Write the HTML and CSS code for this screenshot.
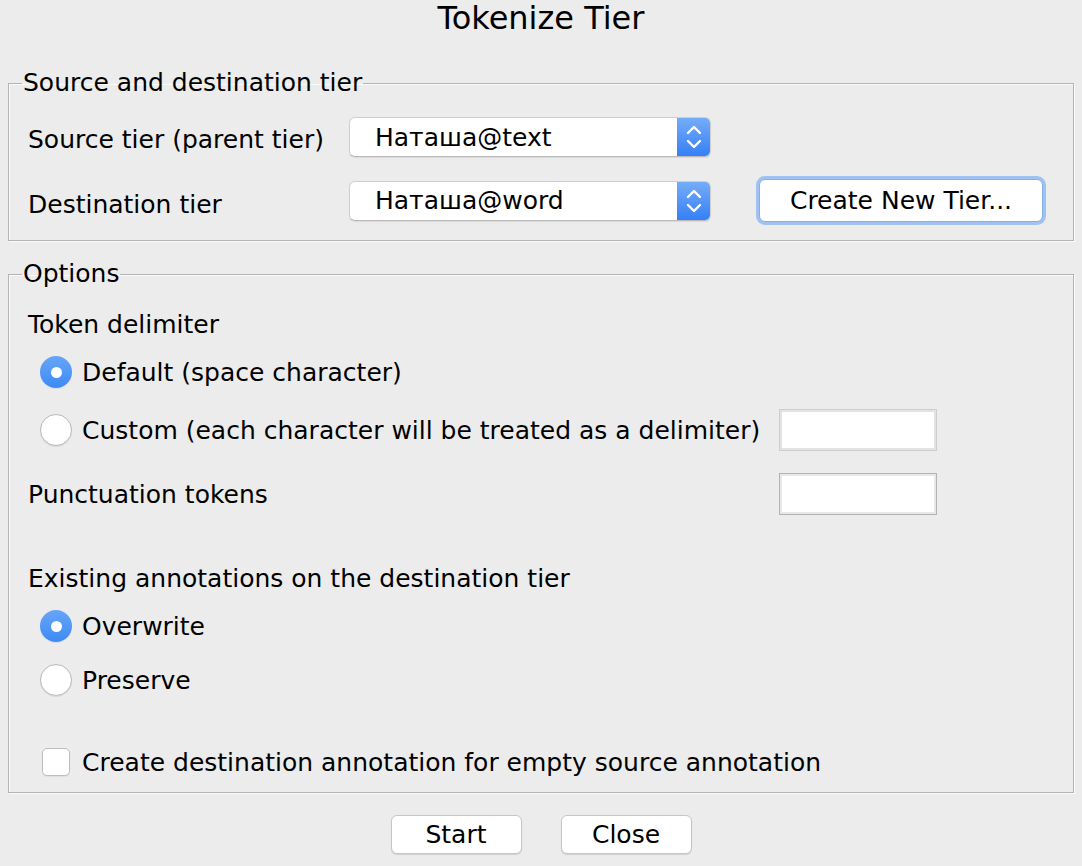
FILE: index.html
```html
<!DOCTYPE html>
<html>
<head>
<meta charset="utf-8">
<link rel="stylesheet" href="styles.css">
</head>
<body>
<div class="dialog">
  <h1 class="title">Tokenize Tier</h1>

  <fieldset class="group group-tiers">
    <legend class="legend">Source and destination tier</legend>
    <div class="tier-grid">
      <div class="label">Source tier (parent tier)</div>
      <div class="combo">
        <span class="combo-text">Наташа@text</span>
        <span class="combo-arrow">
          <svg width="20" height="30" viewBox="0 0 20 30"><path d="M4 11 L10 5 L16 11" fill="none" stroke="#fff" stroke-width="2.4" stroke-linecap="round" stroke-linejoin="round"/><path d="M4 19 L10 25 L16 19" fill="none" stroke="#fff" stroke-width="2.4" stroke-linecap="round" stroke-linejoin="round"/></svg>
        </span>
      </div>
      <div></div>

      <div class="label label-low">Destination tier</div>
      <div class="combo">
        <span class="combo-text">Наташа@word</span>
        <span class="combo-arrow">
          <svg width="20" height="30" viewBox="0 0 20 30"><path d="M4 11 L10 5 L16 11" fill="none" stroke="#fff" stroke-width="2.4" stroke-linecap="round" stroke-linejoin="round"/><path d="M4 19 L10 25 L16 19" fill="none" stroke="#fff" stroke-width="2.4" stroke-linecap="round" stroke-linejoin="round"/></svg>
        </span>
      </div>
      <button class="btn btn-focus">Create New Tier...</button>
    </div>
  </fieldset>

  <fieldset class="group group-options">
    <legend class="legend">Options</legend>
    <div class="opts">
      <div class="row row-head">Token delimiter</div>
      <div class="row row-radio r-default">
        <span class="radio radio-on"></span><span>Default (space character)</span>
      </div>
      <div class="row row-field r-custom">
        <div class="row-radio"><span class="radio"></span><span>Custom (each character will be treated as a delimiter)</span></div>
        <div class="field field-disabled"></div>
      </div>
      <div class="row row-field r-punct">
        <div class="row-head">Punctuation tokens</div>
        <div class="field"></div>
      </div>
      <div class="row row-head r-existing">Existing annotations on the destination tier</div>
      <div class="row row-radio r-overwrite">
        <span class="radio radio-on"></span><span>Overwrite</span>
      </div>
      <div class="row row-radio r-preserve">
        <span class="radio"></span><span>Preserve</span>
      </div>
      <div class="row row-check r-check">
        <span class="checkbox"></span><span>Create destination annotation for empty source annotation</span>
      </div>
    </div>
  </fieldset>

  <div class="actions">
    <button class="btn btn-action">Start</button>
    <button class="btn btn-action">Close</button>
  </div>
</div>
</body>
</html>
```

FILE: styles.css
```css
html, body {
  margin: 0;
  padding: 0;
  background: #ececec;
}
body {
  font-family: "DejaVu Sans", "Liberation Sans", sans-serif;
  font-size: 25px;
  color: #000;
  width: 1082px;
  height: 866px;
  overflow: hidden;
}
.dialog {
  padding: 0 8px;
}
.title {
  margin: 0 0 32px 0;
  height: 36px;
  line-height: 36px;
  font-size: 32px;
  font-weight: normal;
  text-align: center;
}
.group {
  margin: 0;
  padding: 0;
  width: 1066px;
  box-sizing: border-box;
  border: 1px solid #b4b4b4;
  box-shadow: inset 1px 1px 0 #fafafa, 1px 1px 0 #fafafa;
}
.legend {
  margin-left: 13px;
  padding: 0 1px;
  line-height: 30px;
  height: 30px;
}
.group-options {
  margin-top: 18px;
}

/* tiers */
.tier-grid {
  display: grid;
  grid-template-columns: 276px 362px 290px;
  column-gap: 45px;
  grid-template-rows: 40px 49px;
  row-gap: 19px;
  align-items: center;
  padding: 19px 0 15px 19px;
}
.label {
  position: relative;
  top: 2px;
  white-space: nowrap;
}
.label-low {
  top: 4px;
}
.combo {
  height: 40px;
  box-sizing: border-box;
  background: #fff;
  border: 1px solid #cfcfcf;
  border-bottom-color: #b9b9b9;
  border-radius: 6px;
  display: flex;
  align-items: center;
  overflow: hidden;
  box-shadow: 0 1px 1px rgba(0,0,0,0.08);
}
.combo-text {
  flex: 1;
  padding-left: 25px;
}
.combo-arrow {
  width: 33px;
  height: 100%;
  background: linear-gradient(#74acf8, #3580f6);
  display: flex;
  align-items: center;
  justify-content: center;
}
.btn {
  font-family: inherit;
  font-size: 25px;
  color: #000;
  background: #fff;
  border: 1px solid #c6c6c6;
  border-radius: 6px;
  box-shadow: 0 1px 1px rgba(0,0,0,0.12);
  padding: 0;
}
.btn-focus {
  margin: 0 3px;
  width: 284px;
  height: 43px;
  border-color: #86aee9;
  box-shadow: 0 0 0 3px #9fc2f2;
}

/* options */
.opts {
  padding: 14px 0 9px 0;
  display: flex;
  flex-direction: column;
}
.row {
  height: 42px;
  display: flex;
  align-items: center;
  white-space: nowrap;
}
.row-head {
  padding-left: 19px;
}
.row-radio {
  display: flex;
  align-items: center;
  gap: 10px;
  padding-left: 31px;
}
.row-check {
  padding-left: 33px;
  gap: 12px;
}
.row-field {
  display: grid;
  grid-template-columns: 770px 158px;
  align-items: center;
}
.row-field .row-head,
.row-field .row-radio {
  height: 42px;
  display: flex;
  align-items: center;
}
.r-default { margin-top: 6px; }
.r-custom { margin-top: 16px; }
.r-punct { margin-top: 22px; }
.r-existing { margin-top: 42px; }
.r-overwrite { margin-top: 6px; }
.r-preserve { margin-top: 12px; }
.r-check { margin-top: 40px; }

.radio {
  width: 32px;
  height: 32px;
  box-sizing: border-box;
  border-radius: 50%;
  background: #fff;
  border: 1px solid #b9b9b9;
  box-shadow: 0 1px 1px rgba(0,0,0,0.08);
  display: inline-flex;
  align-items: center;
  justify-content: center;
  flex: none;
}
.radio-on {
  border: none;
  background: linear-gradient(#67a6f8, #3d8af5);
}
.radio-on::after {
  content: "";
  width: 11px;
  height: 11px;
  border-radius: 50%;
  background: #fff;
}
.checkbox {
  width: 28px;
  height: 28px;
  box-sizing: border-box;
  background: #fff;
  border: 1px solid #bdbdbd;
  border-radius: 5px;
  box-shadow: 0 1px 1px rgba(0,0,0,0.06);
  flex: none;
}
.field {
  width: 158px;
  height: 42px;
  box-sizing: border-box;
  background: #fff;
  border: 1px solid #b3b3b3;
  box-shadow: inset 0 0 0 2px #e8e8e8;
}
.field-disabled {
  border-color: #cdcdcd;
  box-shadow: inset 0 0 0 2px #e3e3e3;
}

.actions {
  margin-top: 22px;
  display: flex;
  justify-content: center;
  gap: 39px;
}
.btn-action {
  width: 131px;
  height: 39px;
}
```
